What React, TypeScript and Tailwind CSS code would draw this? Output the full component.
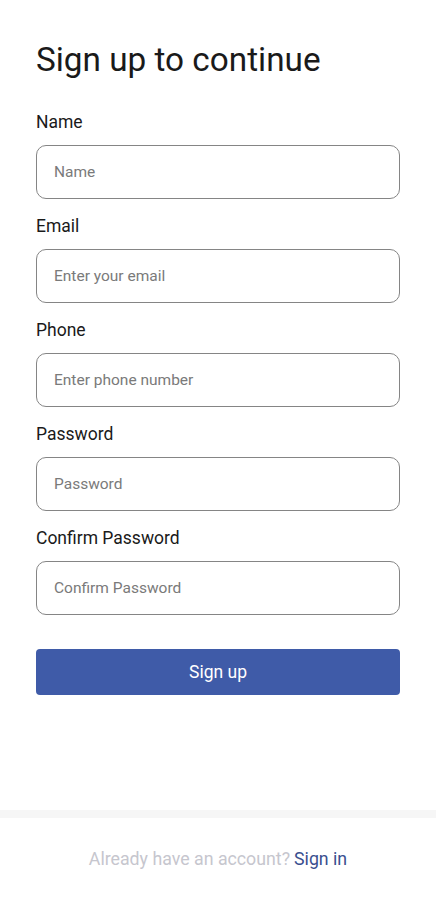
import React from "react";

const fields = [
    { label: "Name", placeholder: "Name", type: "text" },
    { label: "Email", placeholder: "Enter your email", type: "email" },
    { label: "Phone", placeholder: "Enter phone number", type: "tel" },
    { label: "Password", placeholder: "Password", type: "password" },
    { label: "Confirm Password", placeholder: "Confirm Password", type: "password" },
];

export default function App() {
    return (
        <div className="flex flex-col min-h-[900px] bg-white font-['Roboto','Liberation_Sans',sans-serif]">
            <div className="flex flex-col px-9 pt-10 flex-1">
                <h1 className="text-[33.3px] leading-[40px] text-[#1a1a1a] font-normal">Sign up to continue</h1>
                <div className="flex flex-col gap-[15px] mt-[30px]">
                    {fields.map((field, idx) => (
                        <div key={`field-${idx}`} className="flex flex-col gap-[11px]">
                            <label className="text-[17.5px] leading-6 text-[#1a1a1a]">{field.label}</label>
                            <input
                                type={field.type}
                                placeholder={field.placeholder}
                                className="h-[54px] w-full rounded-[10px] border border-[#858585] px-[17px] text-[15.5px] text-[#333] placeholder:text-[#7a7a7a] outline-none"
                            />
                        </div>
                    ))}
                </div>
                <button className="mt-[34px] h-[46px] w-full rounded-[4px] bg-[#3f5ba8] text-white text-[17.5px]">
                    Sign up
                </button>
            </div>
            <div className="h-[8px] bg-[#f6f6f6]" />
            <div className="h-[82px] flex items-center justify-center text-[17.75px]">
                <span className="text-[#c6c6ce]">Already have an account?</span>
                <a className="ml-1 text-[#3a4f8f]">Sign in</a>
            </div>
        </div>
    );
}
